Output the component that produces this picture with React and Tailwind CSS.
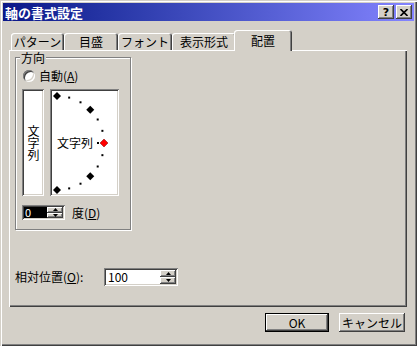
import React from "react";

const FONT = { fontFamily: '"Noto Sans CJK JP", "Noto Sans", sans-serif' };

const raised =
  "shadow-[inset_-1px_-1px_#404040,inset_1px_1px_#ffffff,inset_-2px_-2px_#808080,inset_2px_2px_#d4d0c8]";
const sunken =
  "shadow-[inset_1px_1px_#808080,inset_-1px_-1px_#ffffff,inset_2px_2px_#404040,inset_-2px_-2px_#d4d0c8]";

function Tab({ label, w, active }) {
  if (active) {
    return (
      <div
        className={`relative z-10 -mx-[2px] -mb-[1px] h-[21px] rounded-t-[3px] bg-[#d4d0c8] flex items-center justify-center text-[12px] leading-[14px] shadow-[inset_1px_1px_#ffffff,inset_-1px_0_#404040,inset_-2px_0_#808080] ${w}`}
      >
        {label}
      </div>
    );
  }
  return (
    <div
      className={`h-[17px] rounded-t-[3px] flex items-center justify-center text-[12px] leading-[14px] shadow-[inset_1px_1px_#ffffff,inset_-1px_0_#404040,inset_-2px_0_#808080] ${w}`}
    >
      {label}
    </div>
  );
}

function Arrow({ up }) {
  return (
    <svg width="5" height="3" viewBox="0 0 5 3" aria-hidden="true">
      {up ? <path d="M2.5 0 L5 3 L0 3 Z" fill="black" /> : <path d="M0 0 L5 0 L2.5 3 Z" fill="black" />}
    </svg>
  );
}

function Spinner() {
  return (
    <div className="flex flex-col w-[16px] h-full">
      <div className={`flex-1 flex items-center justify-center bg-[#d4d0c8] ${raised}`}>
        <Arrow up />
      </div>
      <div className={`flex-1 flex items-center justify-center bg-[#d4d0c8] ${raised}`}>
        <Arrow />
      </div>
    </div>
  );
}

function Dial() {
  // semicircle of marks, centre at the left edge of the label
  const cx = 5;
  const cy = 52;
  const r = 47;
  const marks = [];
  for (let k = -6; k <= 6; k++) {
    const a = (k * 15 * Math.PI) / 180;
    const x = cx + r * Math.cos(a);
    const y = cy - r * Math.sin(a);
    const big = k === 6 || k === 3 || k === -3 || k === -6 || k === 0;
    if (big) {
      marks.push(
        <path
          key={k}
          d={`M${x} ${y - 4} L${x + 4} ${y} L${x} ${y + 4} L${x - 4} ${y} Z`}
          fill={k === 0 ? "#ff0000" : "black"}
          stroke={k === 0 ? "#800000" : "none"}
          strokeWidth="0.5"
        />
      );
    } else {
      marks.push(<rect key={k} x={x - 1} y={y - 1} width="2" height="2" fill="black" />);
    }
  }
  return (
    <svg width="65" height="103" viewBox="0 0 65 103">
      {marks}
      <rect x="45" y="51" width="2" height="2" fill="black" />
      <text x="5" y="56.5" fontSize="12" fill="black" style={FONT}>
        文字列
      </text>
    </svg>
  );
}

export default function App() {
  return (
    <div
      className="w-[417px] h-[346px] bg-[#d4d0c8] flex flex-col text-black shadow-[inset_1px_1px_#d4d0c8,inset_2px_2px_#ffffff,inset_-1px_-1px_#404040,inset_-2px_-2px_#808080]"
      style={FONT}
    >
      {/* title bar */}
      <div className="mx-[3px] mt-[3px] h-[18px] flex items-center bg-gradient-to-r from-[#0a1688] to-[#8484ff] pl-[2px] pr-[2px]">
        <span className="flex-1 text-white font-bold text-[13px] leading-none">軸の書式設定</span>
        <div className="flex gap-[2px]">
          <div className={`w-[16px] h-[14px] bg-[#d4d0c8] flex items-center justify-center ${raised}`}>
            <span className="text-[11px] font-bold leading-none" style={{ fontFamily: '"DejaVu Sans", sans-serif' }}>
              ?
            </span>
          </div>
          <div className={`w-[16px] h-[14px] bg-[#d4d0c8] flex items-center justify-center ${raised}`}>
            <svg width="8" height="7" viewBox="0 0 8 7" aria-hidden="true">
              <path d="M0.5 0 L7.5 7 M7.5 0 L0.5 7" stroke="black" strokeWidth="1.6" />
            </svg>
          </div>
        </div>
      </div>

      {/* tabs */}
      <div className="mt-[9px] pl-[11px] flex items-end">
        <Tab label="パターン" w="w-[53px]" />
        <Tab label="目盛" w="w-[54px]" />
        <Tab label="フォント" w="w-[54px]" />
        <Tab label="表示形式" w="w-[64px]" />
        <Tab label="配置" w="w-[58px]" active />
      </div>

      {/* panel */}
      <div className="ml-[9px] w-[398px] h-[257px] pl-[6px] pt-[7px] flex flex-col shadow-[inset_1px_1px_#ffffff,inset_-1px_-1px_#404040,inset_-2px_-2px_#808080]">
        <div className="relative w-[116px] h-[173px] border border-[#808080] shadow-[1px_1px_0_#ffffff,inset_1px_1px_0_#ffffff] pl-[6px] pt-[12px] flex flex-col">
          <span className="absolute -top-[6px] left-[4px] bg-[#d4d0c8] px-[1px] text-[12px] leading-[12px]">方向</span>

          <div className="flex items-center gap-[4px] h-[12px] ml-[1px]">
            <div className={`w-[12px] h-[12px] rounded-full bg-white ${sunken}`} />
            <span className="text-[12px] leading-none">
              自動(<u>A</u>)
            </span>
          </div>

          <div className="flex gap-[6px] mt-[7px]">
            <div className={`w-[22px] h-[107px] bg-white flex items-center justify-center ${sunken}`}>
              <span className="[writing-mode:vertical-rl] text-[12px] leading-[14px] tracking-[0px]">文字列</span>
            </div>
            <div className={`w-[69px] h-[107px] bg-white p-[2px] ${sunken}`}>
              <Dial />
            </div>
          </div>

          <div className="flex items-center gap-[7px] mt-[9px]">
            <div className={`w-[43px] h-[15px] bg-white p-[2px] flex ${sunken}`}>
              <div className="flex-1 bg-black text-white text-[11px] leading-[11px] pl-[1px]">0</div>
              <Spinner />
            </div>
            <span className="text-[12px] leading-none">
              度(<u>D</u>)
            </span>
          </div>
        </div>

        <div className="flex items-center mt-[38px]">
          <span className="w-[89px] text-[12px] leading-none">
            相対位置(<u>O</u>):
          </span>
          <div className={`w-[74px] h-[18px] bg-white p-[2px] flex ${sunken}`}>
            <div className="flex-1 text-[12px] leading-[14px] pl-[2px]">100</div>
            <Spinner />
          </div>
        </div>
      </div>

      {/* buttons */}
      <div className="mt-[6px] pr-[12px] flex justify-end gap-[10px]">
        <div className="w-[64px] h-[19px] border border-black">
          <div className={`w-full h-full bg-[#d4d0c8] flex items-center justify-center text-[12px] ${raised}`}>OK</div>
        </div>
        <div className={`w-[66px] h-[19px] bg-[#d4d0c8] flex items-center justify-center text-[12px] ${raised}`}>
          キャンセル
        </div>
      </div>
    </div>
  );
}
